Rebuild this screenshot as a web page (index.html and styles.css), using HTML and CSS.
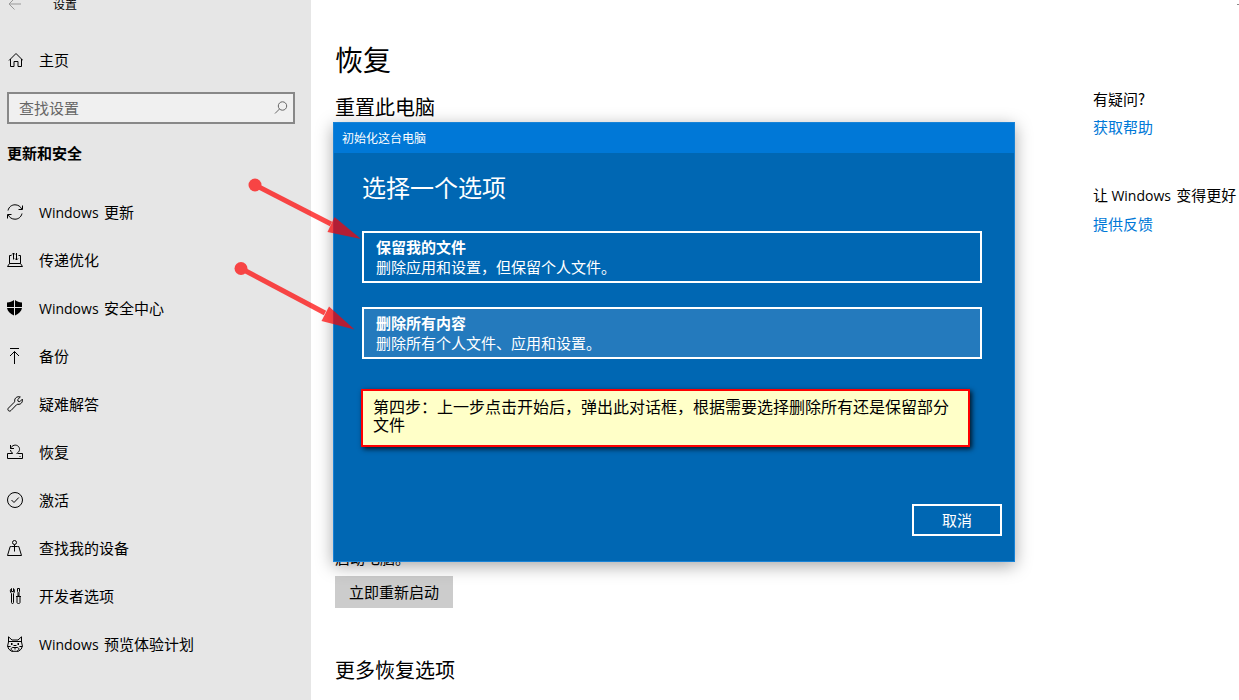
FILE: index.html
```html
<!DOCTYPE html>
<html lang="zh-CN">
	<head>
		<meta charset="UTF-8">
		<meta name="viewport" content="width=device-width, initial-scale=1.0">
		<title>设置</title>
		<link rel="stylesheet" href="styles.css">
	</head>
	<body>

		<div class="window">

			<div class="sidebar">
				<div class="topbar">
					<svg class="icon back" viewBox="0 0 16 16"><path d="M14 8H2M7.500 2.500L2 8l5.500 5.500"/></svg>
					<span>设置</span>
				</div>

				<a class="nav-item home" href="#">
					<svg class="icon" viewBox="0 0 16 16"><path d="M2 8.500L9 1.500l7 7M3.500 7v7.500h3.500v-5h4v5h3.500V7"/></svg>
					主页
				</a>

				<div class="search">
					<input type="text" id="search" placeholder="查找设置" aria-label="查找设置">
					<svg class="icon search-icon" viewBox="0 0 16 16"><circle cx="9.500" cy="6" r="4.200"/><path d="M6.500 9L2 13.500"/></svg>
				</div>

				<h2 class="section">更新和安全</h2>

				<nav>
					<a class="nav-item" href="#">
						<svg class="icon" viewBox="0 0 16 16"><path d="M1 6.500C2 2.500 5 .8 8 .8c3.200 0 5.500 1.700 6.700 4.200M15.500 1.500V5.500h-4M15 9.500c-1 4-4 5.700-7 5.700-3.200 0-5.500-1.700-6.700-4.200M.5 14.500V10.500h4"/></svg>
						<span><span class="latin">Windows</span> 更新</span>
					</a>
					<a class="nav-item" href="#">
						<svg class="icon" viewBox="0 0 16 16"><path d="M4.500 3.500h-2v8M11.500 3.500h2v8M2.500 11.500h11l2 3H.5zM6.500 7.500V1M5 2.500L6.500 1 8 2.500M9.500 1v7M8 6.500L9.500 8 11 6.500"/></svg>
						传递优化
					</a>
					<a class="nav-item" href="#">
						<svg class="icon" viewBox="0 0 16 16"><path class="solid" d="M7 0v7H0V2.500C3 2.500 5 1.500 7 0zM8 0c2 1.500 4 2.500 7 2.500V7H8zM0 8h7v7.500C3 13.500.5 11.500 0 8zM8 8h7c-.5 3.500-3 5.500-7 7.500z"/></svg>
						<span><span class="latin">Windows</span> 安全中心</span>
					</a>
					<a class="nav-item" href="#">
						<svg class="icon" viewBox="0 0 16 16"><path d="M3 .5h9M7.500 16V3.500M3 8l4.500-4.500L12 8"/></svg>
						备份
					</a>
					<a class="nav-item" href="#">
						<svg class="icon" viewBox="0 0 16 16"><path d="M13.300 1L10.700 3.600l.4 1.700 1.700.4L15.300 3.200C16 6 14 8.600 11 8.300c-.6 0-1 0-1.400.4L4 14.500c-1.800 1.800-4.300-.7-2.500-2.500L7.200 6.300c.4-.4.5-.8.5-1.400C7.400 2 10.300 0 13.300 1z"/></svg>
						疑难解答
					</a>
					<a class="nav-item" href="#">
						<svg class="icon" viewBox="0 0 16 16"><path d="M5.500 9.500h-5v5h15v-5h-5M12.500 12.500h1M3.500 1v3.500H7M3.500 4.500C5 1 9 0 11.500 2.500 13.500 5 12.500 8 9.500 9.500M3.500 6c.2 1.500 1.200 2.800 2.500 3.500"/></svg>
						恢复
					</a>
					<a class="nav-item" href="#">
						<svg class="icon" viewBox="0 0 16 16"><circle cx="8" cy="8" r="7.500"/><path d="M4.500 8l2.500 2.500L11.800 5.500"/></svg>
						激活
					</a>
					<a class="nav-item" href="#">
						<svg class="icon" viewBox="0 0 16 16"><circle cx="7.500" cy="2.500" r="2"/><path d="M7.500 4.500V11.500M4.500 6.500h6M4.500 6.500h-1.300L.5 15.500h14L11.800 6.500h-1.300"/></svg>
						查找我的设备
					</a>
					<a class="nav-item" href="#">
						<svg class="icon" viewBox="0 0 16 16"><path d="M4.500.5v3h2v-3c1.300 1 1.300 3.500 0 5v9c0 1.400-2 1.400-2 0v-9c-1.600-1.500-1.600-4 0-5M10.500.5h2v3l-.5 1v3.500h-1V4.500l-.5-1zM9 8.500h5M10 8.500v6c0 1.400 3 1.400 3 0v-6"/></svg>
						开发者选项
					</a>
					<a class="nav-item" href="#">
						<svg class="icon" viewBox="0 0 16 16"><path d="M1.500 6V.8L5 4h6l3.500-3.200V6M1.500 5.500h13M1.500 6L.6 10l1.100 3 2.800 2.300h7l2.800-2.300 1.100-3-.9-4M.6 10.500h3M12.400 10.500h3M6.500 9.500h3M6 15c-2.500-.5-2.500-3.500 0-3.500h4c2.500 0 2.500 3 0 3.500M8 11.500v2"/><path class="solid" d="M4 7h1.500v2H4zM10.500 7H12v2h-1.500z"/></svg>
						<span><span class="latin">Windows</span> 预览体验计划</span>
					</a>
				</nav>
			</div>

			<main class="content">
				<h1>恢复</h1>
				<h2>重置此电脑</h2>
				<p class="startup">启动电脑。</p>
				<button class="restart">立即重新启动</button>
				<h2 class="more">更多恢复选项</h2>

				<div class="dialog" role="dialog" aria-labelledby="dialog-title">
					<div class="dialog-bar" id="dialog-title">初始化这台电脑</div>
					<div class="dialog-body">
						<h2>选择一个选项</h2>
						<button class="option">
							<strong>保留我的文件</strong>
							<span>删除应用和设置，但保留个人文件。</span>
						</button>
						<button class="option hover">
							<strong>删除所有内容</strong>
							<span>删除所有个人文件、应用和设置。</span>
						</button>
						<div class="note">第四步：上一步点击开始后，弹出此对话框，根据需要选择删除所有还是保留部分文件</div>
					</div>
					<button class="cancel">取消</button>
				</div>
			</main>

			<aside class="help">
				<div>有疑问?</div>
				<a href="#">获取帮助</a>
				<div class="feedback">让 <span class="latin">Windows</span> 变得更好</div>
				<a href="#">提供反馈</a>
			</aside>

			<span class="minimize"></span>

			<svg class="arrows" viewBox="0 0 140 170">
				<g>
					<circle cx="25" cy="15" r="6.500"/>
					<path d="M25 15L101 54"/>
					<path class="head" d="M131 69L104.500 47l-7 15z"/>
				</g>
				<g>
					<circle cx="11" cy="98.500" r="6.500"/>
					<path d="M11 98.500L95 143"/>
					<path class="head" d="M124.500 159.500L99 136.500l-7.500 14.500z"/>
				</g>
			</svg>

		</div>

	</body>
</html>
```
FILE: styles.css
```css
* {
	box-sizing: border-box;
}
body {
	margin: 0;
	font-family: "Noto Sans CJK SC", sans-serif;
	font-size: 15px;
	line-height: 20px;
	color: black;
	background-color: white;
}
h1, h2, p {
	margin: 0;
	font-weight: normal;
}
button {
	font: inherit;
}
a {
	text-decoration: none;
}
.latin {
	margin-right: 2px;
	font-family: "Open Sans", sans-serif;
	font-size: 14px;
}
.window {
	position: relative;
	display: flex;
	min-height: 100vh;
	overflow: hidden;
}

/* left navigation */
.sidebar {
	flex: none;
	width: 311px;
	padding: 0 16px 0 7px;
	background-color: #e6e6e6;
}
.icon {
	flex: none;
	width: 16px;
	height: 16px;
	fill: none;
	stroke: black;
	stroke-width: 1;
}
.solid {
	fill: black;
	stroke: none;
}
.topbar {
	display: flex;
	align-items: center;
	gap: 30px;
	height: 12px;
	margin-top: -2px;
	font-size: 12px;
	line-height: 12px;
}
.back {
	stroke: #999;
}
.nav-item {
	display: flex;
	align-items: center;
	gap: 16px;
	height: 48px;
	color: black;
}
.home {
	margin-top: 26px;
}
.search {
	position: relative;
	margin-top: 8px;
}
.search input {
	display: block;
	width: 100%;
	height: 32px;
	padding: 0 36px 2px 10px;
	border: 2px solid #888;
	background-color: #f0f0f0;
	font: inherit;
}
.search input::placeholder {
	color: #666;
}
.search-icon {
	position: absolute;
	top: 8px;
	right: 6px;
	stroke: #666;
}
.section {
	margin-bottom: 6px;
	font-size: 15px;
	font-weight: bold;
	line-height: 58px;
}

/* page */
.content {
	position: relative;
	flex: 1;
	padding: 39px 24px 0;
}
.content h1 {
	font-size: 28px;
	line-height: 40px;
}
.content h2 {
	font-size: 20px;
	line-height: 28px;
}
.content > h2 {
	margin-top: 14px;
}
.startup {
	margin-top: 427px;
}
.restart {
	height: 32px;
	margin-top: 8px;
	padding: 0 14px;
	border: 0;
	background-color: #ccc;
	color: black;
}
.content > .more {
	margin-top: 48px;
}
.help {
	flex: none;
	width: 146px;
	padding-top: 85px;
	line-height: 28px;
	white-space: nowrap;
}
.help a {
	color: #0078d7;
}
.feedback {
	margin-top: 40px;
}
.minimize {
	position: absolute;
	top: 4px;
	right: 0;
	width: 2px;
	height: 1px;
	background-color: #888;
}

/* reset dialog */
.dialog {
	position: absolute;
	top: 122px;
	left: 22px;
	display: flex;
	flex-direction: column;
	width: 682px;
	height: 440px;
	border: 1px solid #1883d7;
	background-color: #0067b3;
	box-shadow: 0 4px 16px rgba(0, 0, 0, 0.35);
	color: white;
}
.dialog-bar {
	padding: 0 8px;
	background-color: #0078d7;
	font-size: 12px;
	line-height: 30px;
}
.dialog-body {
	flex: 1;
	padding: 18px 32px 0 28px;
}
.dialog-body h2 {
	margin-bottom: 28px;
	font-size: 24px;
	line-height: 32px;
}
.option {
	display: block;
	width: 100%;
	height: 52px;
	margin-bottom: 24px;
	padding: 0 12px;
	border: 2px solid white;
	background-color: transparent;
	color: white;
	text-align: left;
}
.option strong, .option span {
	display: block;
}
.hover {
	background-color: #247abd;
}
.note {
	margin: 30px 12px 0 -1px;
	padding: 6px 10px 12px;
	border: 2px solid red;
	background-color: #ffffc8;
	box-shadow: 2px 2px 5px rgba(0, 0, 0, 0.8);
	font-size: 16px;
	line-height: 18px;
	color: black;
}
.cancel {
	align-self: flex-end;
	width: 90px;
	height: 32px;
	margin: 0 12px 25px 0;
	padding: 0;
	border: 2px solid white;
	background-color: transparent;
	color: white;
}

/* red pointers over the dialog */
.arrows {
	position: absolute;
	top: 170px;
	left: 230px;
	width: 140px;
	height: 170px;
	pointer-events: none;
}
.arrows g {
	fill: red;
	opacity: 0.7;
}
.arrows path {
	stroke: red;
	stroke-width: 5;
}
.arrows .head {
	stroke: none;
}
```
